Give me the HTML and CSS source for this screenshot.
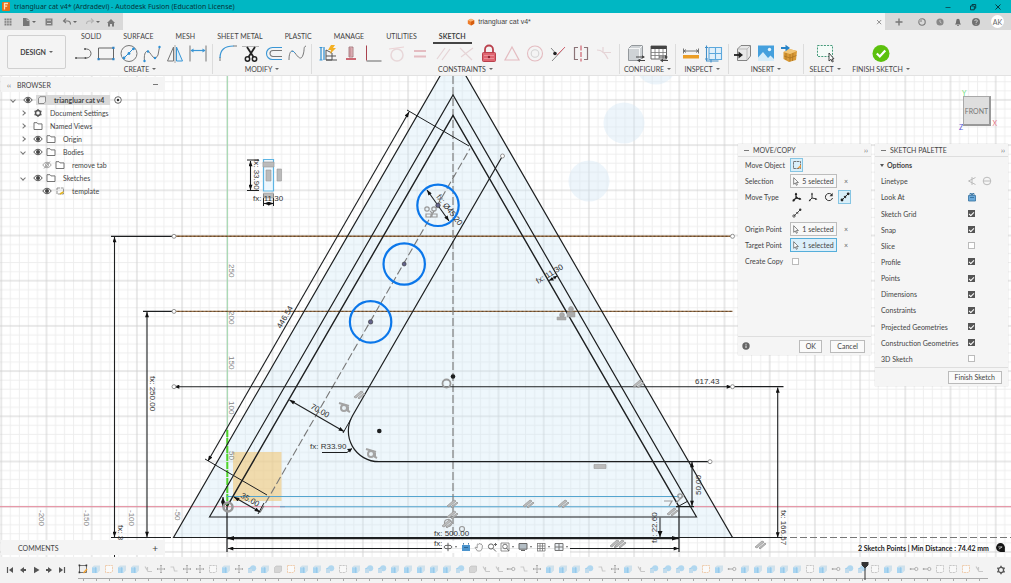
FILE: index.html
```html
<!DOCTYPE html>
<html lang="en">
<head>
<meta charset="utf-8">
<title>triangluar cat v4* (Ardradevi) - Autodesk Fusion (Education License)</title>
<link rel="stylesheet" href="styles.css">
</head>
<body>
<svg class="defs" aria-hidden="true">
  <symbol id="eye" viewBox="0 0 10 8"><path d="M.7 4Q5-1.6 9.3 4 5 9.6.7 4z" fill="none" stroke="#555" stroke-width="1"/><circle cx="5" cy="4" r="2" fill="#444"/></symbol>
  <symbol id="eyeoff" viewBox="0 0 10 8"><path d="M.7 4Q5-1.6 9.3 4 5 9.6.7 4zM2 7.5 8 .5" fill="none" stroke="#999" stroke-width=".9"/><circle cx="5" cy="4" r="1.6" fill="none" stroke="#999" stroke-width=".8"/></symbol>
  <symbol id="folder" viewBox="0 0 10 8"><path d="M1 7.5V.7h3l1 1.2h4v5.6z" fill="#fff" stroke="#666" stroke-width=".9"/></symbol>
  <symbol id="cursor" viewBox="0 0 6 9"><path d="M.7.7v6.6l1.6-1.4 1.1 2.4 1-.5-1-2.3h2z" fill="#fff" stroke="#555" stroke-width=".7"/></symbol>
  <symbol id="t-S" viewBox="0 0 10 10"><path d="M1.5 1.5h7v7h-7z" fill="#eee" stroke="#555" stroke-width=".8"/><path d="M.6.6h1.6v1.6H.6zM7.6.6h1.6v1.6H7.6zM.6 7.6h1.6v1.6H.6z" fill="#333"/><path d="m5.5 9 3.5-4" stroke="#f2a12d" stroke-width="1.4"/></symbol>
  <symbol id="t-E" viewBox="0 0 10 10"><path d="M1 3.2h5.5V9H1z" fill="#a9d5f1"/><path d="m1 3.2 2-1.8h6L6.5 3.2zM6.5 3.2 9 1.4v5.2L6.5 9z" fill="#d0e1eb"/><path d="M4.5 3.2V9" stroke="#90c4e5" stroke-width=".7"/></symbol>
  <symbol id="t-C" viewBox="0 0 10 10"><path d="M1 4.6 5 2.5v4.800L1.500 9z" fill="#a2ceeb"/><circle cx="6.200" cy="4.300" r="3" fill="#b1d7ef"/><path d="M1 5h4v4H1z" fill="#c2dced"/></symbol>
  <symbol id="t-K" viewBox="0 0 10 10"><path d="M1.5 1.5h7v6l-1.500 1h-5.500z" fill="#fafafa" stroke="#edc4a0" stroke-width=".8" stroke-dasharray="2.200 .6"/></symbol>
  <symbol id="t-g" viewBox="0 0 10 10"><path d="M1.5 1.5h7v6l-1.500 1h-5.500z" fill="#f8f8f8" stroke="#bbb" stroke-width=".8" stroke-dasharray="2.200 .8"/></symbol>
  <symbol id="t-M" viewBox="0 0 10 10"><path d="M5 1v8M1 5h8M4 2l1-1 1 1M4 8l1 1 1-1M2 4 1 5l1 1M8 4l1 1-1 1" fill="none" stroke="#aaa" stroke-width=".9"/></symbol>
  <symbol id="t-G" viewBox="0 0 10 10"><path d="M1.500 3.500 3 2h5.500v5L7 8.500H1.500z" fill="#d5d5d5" stroke="#bcbcbc" stroke-width=".6"/></symbol>
  <symbol id="t-L" viewBox="0 0 10 10"><path d="M2 2.500 5 7.500H9M4.500 3v3" fill="none" stroke="#c8c8c8" stroke-width="1.200"/></symbol>
  <symbol id="t-N" viewBox="0 0 10 10"><path d="M1.500 3h3l1 4h3" fill="none" stroke="#ccc" stroke-width="1.200"/></symbol>
  <symbol id="t-D" viewBox="0 0 10 10"><path d="M1 5h5" stroke="#aaa"/><circle cx="7.300" cy="5" r="1.600" fill="none" stroke="#aaa" stroke-width=".9"/><circle cx="1.600" cy="5" r=".9" fill="#aaa"/></symbol>
</svg>

<header class="titlebar">
  <svg class="titlebar__logo" viewBox="0 0 8 9"><rect width="8" height="9" rx="1" fill="#e8701a"/><path d="M2.500 7.500v-6h3.500M2.500 4.200h2.700" fill="none" stroke="#ffe0bc" stroke-width="1.300"/></svg>
  <span class="titlebar__text">triangluar cat v4* (Ardradevi) - Autodesk Fusion (Education License)</span>
  <div class="titlebar__win">
    <button aria-label="Minimize"><svg viewBox="0 0 8 8"><path d="M1.500 4.500h5" stroke="#075962"/></svg></button>
    <button aria-label="Restore"><svg viewBox="0 0 8 8"><path d="M1.500 3h3.800v3.800H1.500zM3 3V1.500h3.700v3.700H5.300" fill="none" stroke="#053e46"/></svg></button>
    <button aria-label="Close"><svg viewBox="0 0 8 8"><path d="m1.500 1.500 5 5m0-5-5 5" stroke="#053e46"/></svg></button>
  </div>
</header>

<div class="docbar">
  <div class="docbar__quick">
    <button aria-label="Data panel"><svg viewBox="0 0 10 10"><path d="M1.500 1.500h7v7h-7z" fill="#808080"/><path d="M1 3.700h8M1 6.200h8M3.700 1v8M6.200 1v8" stroke="#d9d9d9" stroke-width=".7"/></svg></button>
    <button aria-label="File"><svg viewBox="0 0 10 10"><path d="M2 1h4l2.500 2.500V9H2z" fill="#777"/><path d="M6 1v2.500h2.500" stroke="#ddd" fill="none" stroke-width=".6"/></svg><i class="caret"></i></button>
    <button aria-label="Save"><svg viewBox="0 0 10 10"><path d="M1.500 1.500h7v7h-7z" fill="#808080"/><path d="M3 3.200h4M3 6.500h4" stroke="#ddd" stroke-width=".9"/></svg></button>
    <button aria-label="Undo"><svg viewBox="0 0 10 10"><path d="M4 1.500 1.500 4 4 6M2 4h3.500Q8.500 4 8.500 7.500" fill="none" stroke="#777" stroke-width="1.100"/></svg><i class="caret"></i></button>
    <button aria-label="Redo"><svg viewBox="0 0 10 10"><path d="M6 1.500 8.500 4 6 6M8 4H4.500Q1.500 4 1.500 7" fill="none" stroke="#b5b5b5" stroke-width="1.100"/></svg><i class="caret"></i></button>
    <button aria-label="Home"><svg viewBox="0 0 10 10"><path d="M1 6 5 2l4 4H8v3.500H6V7H4v2.500H2V6z" fill="#777"/></svg></button>
  </div>
  <div class="docbar__tab">
    <svg class="docbar__cube" viewBox="0 0 10 10"><path d="m5 .8 4 2v4.500l-4 2-4-2V2.800z" fill="#ee7b28"/><path d="m5 .8 4 2-4 1.900-4-1.900z" fill="#f9b477"/><path d="m5 4.700 4-1.900v4.500l-4 2z" fill="#d65e10"/></svg>
    <span>triangluar cat v4*</span>
  </div>
  <button class="docbar__close" aria-label="Close document"><svg viewBox="0 0 8 8"><path d="m2 2 4.200 4.200M6.200 2 2 6.200" stroke="#777" stroke-width=".8"/></svg></button>
  <div class="docbar__right">
    <button aria-label="New tab"><svg viewBox="0 0 10 10"><path d="M5 1.500v7M1.500 5h7" stroke="#777" stroke-width="1.400"/></svg></button>
    <button aria-label="Extensions"><svg viewBox="0 0 10 10"><circle cx="5" cy="5" r="3.200" fill="none" stroke="#777" stroke-width="1.100"/><path d="M5 5V1.500A3.500 3.500 0 0 0 1.500 5z" fill="#aaa"/></svg></button>
    <button aria-label="Job status"><svg viewBox="0 0 10 10"><circle cx="5" cy="5" r="3.600" fill="#888"/><path d="M5 3v2l1.500 1" fill="none" stroke="#ddd" stroke-width=".7"/></svg></button>
    <button aria-label="Notifications"><svg viewBox="0 0 10 10"><path d="M2 7.500Q3.200 6 3.200 4a1.800 2.300 0 0 1 3.600 0Q6.800 6 8 7.500zM4 8.200h2v.9H4z" fill="#6e6e6e"/></svg></button>
    <button aria-label="Help"><svg viewBox="0 0 10 10"><circle cx="5" cy="5" r="4" fill="#707070"/><path d="M3.700 4a1.300 1.200 0 1 1 1.800 1.100Q5 5.300 5 6M5 6.800v.9" fill="none" stroke="#ddd" stroke-width=".9"/></svg></button>
    <button class="avatar">AK</button>
  </div>
</div>

<div class="ribbon">
  <button class="ribbon__workspace">DESIGN<i class="caret"></i></button>
  <div class="ribbon__body">
    <nav class="tabs">
      <button>SOLID</button><button>SURFACE</button><button>MESH</button><button>SHEET METAL</button><button>PLASTIC</button><button>MANAGE</button><button>UTILITIES</button><button class="tabs__on">SKETCH</button>
    </nav>
    <div class="groups">
      <section class="group group--create">
        <div class="group__tools">
          <button aria-label="Line"><svg viewBox="0 0 20 20"><path d="M3 14h10.500a4.500 4.500 0 0 0 0-9H12" fill="none" stroke="#666"/><circle cx="3" cy="14" r="1" fill="#555"/><circle cx="12.500" cy="14" r="1" fill="#555"/><circle cx="12" cy="5" r="1" fill="#555"/></svg></button>
          <button aria-label="Rectangle"><svg viewBox="0 0 20 20"><path d="M2.500 4h15v11h-15z" fill="none" stroke="#666"/><path d="M16.300 2.800h2.200V5h-2.200zM1.500 14h2.200v2.200H1.500zM16.300 14h2.200v2.200h-2.200z" fill="#2f82c4"/></svg></button>
          <button aria-label="Circle"><svg viewBox="0 0 20 20"><circle cx="10" cy="9.500" r="8" fill="none" stroke="#777"/><path d="m5 14 9.500-9.500" stroke="#2d8fd5"/><g fill="#2d8fd5"><circle cx="5" cy="14" r="1.400"/><circle cx="10" cy="9.500" r="1.400"/><circle cx="14.500" cy="4.800" r="1.400"/></g></svg></button>
          <button aria-label="Spline"><svg viewBox="0 0 20 20"><path d="M2.500 17C1.500 8 5 5 8 9s5 8 8 2l1.500-8" fill="none" stroke="#777"/><g fill="#2d8fd5"><circle cx="2.500" cy="17" r="1.200"/><circle cx="6" cy="7.500" r="1.200"/><circle cx="13" cy="14" r="1.200"/><circle cx="17.500" cy="3" r="1.200"/></g></svg></button>
          <button aria-label="Mirror"><svg viewBox="0 0 20 20"><path d="M8.500 3 2.500 17h6z" fill="none" stroke="#777"/><path d="M11.500 3v14h6z" fill="#dceefa" stroke="#3a96d5"/><path d="M10 1v18" stroke="#888" stroke-width=".7"/></svg></button>
          <button aria-label="Dimension"><svg viewBox="0 0 20 20"><path d="M2 1.500v16M18 1.500v16" stroke="#777"/><path d="M3 6.500h14" stroke="#3a96d5" stroke-width="1.200"/><path d="m2.500 6.500 3-2v4zM17.500 6.500l-3-2v4z" fill="#3a96d5"/></svg></button>
        </div>
        <button class="group__label">CREATE<i class="caret"></i></button>
      </section>
      <section class="group group--modify">
        <div class="group__tools">
          <button aria-label="Fillet"><svg viewBox="0 0 20 20"><path d="M2 17v-4M15 2h4" stroke="#777"/><path d="M2 14Q2 2 15.500 2" fill="none" stroke="#3a96d5" stroke-width="1.200"/></svg></button>
          <button aria-label="Trim"><svg viewBox="0 0 20 20"><path d="M1 2.500h17" stroke="#999" stroke-width=".7"/><path d="m6 3 6.500 10M14 3 7.500 13" stroke="#222" stroke-width="1.800"/><circle cx="6.500" cy="15" r="2.200" fill="none" stroke="#222" stroke-width="1.500"/><circle cx="13.500" cy="15" r="2.200" fill="none" stroke="#222" stroke-width="1.500"/></svg></button>
          <button aria-label="Offset"><svg viewBox="0 0 20 20"><path d="M18 3.500H8.500a6 6 0 0 0 0 12H18" fill="none" stroke="#3a96d5" stroke-width="1.100"/><path d="M18 6.500H9a3 3 0 0 0 0 6h9" fill="none" stroke="#777" stroke-width="1.100"/></svg></button>
          <button aria-label="Break"><svg viewBox="0 0 20 20"><path d="M2 16C2 7 5 5 8 9s6 8 8 2 0-8 3-9" fill="none" stroke="#777"/><path d="M4.500 7.500Q6 6 8 9" fill="none" stroke="#3a96d5"/></svg></button>
        </div>
        <button class="group__label">MODIFY<i class="caret"></i></button>
      </section>
      <section class="group group--constraints">
        <div class="group__tools">
          <button aria-label="Auto constrain"><svg viewBox="0 0 20 20"><path d="M3 3v13M6 3v13" stroke="#3a96d5" stroke-width="1.300"/><path d="M1.500 3.500h3M1.500 16h3" stroke="#3a96d5"/><path d="M8 16V6l6 3v7zM8 16h11M8 12h10" fill="none" stroke="#555"/><path d="m13 1-3 5h3l-1 4 6-6h-3l2-3z" fill="#f4b023"/></svg></button>
          <button aria-label="Horizontal vertical"><svg viewBox="0 0 20 20"><path d="M8 3h4v10H8z" fill="#e7bfc4" stroke="#9a6a70" stroke-width=".8"/><path d="M8.500 5h2M8.500 7h2M8.500 9h2M8.500 11h2" stroke="#9a4f58" stroke-width=".7"/><path d="M5 14h10v2H5z" fill="#cc6873"/></svg></button>
          <button aria-label="Perpendicular"><svg viewBox="0 0 20 20"><path d="M2.500 1.500v15" stroke="#a9424e"/><path d="M2.500 17h15" stroke="#666"/></svg></button>
          <button class="dim" aria-label="Tangent"><svg viewBox="0 0 20 20"><circle cx="10" cy="11" r="6" fill="none" stroke="#c0737c" stroke-width="1.500"/><path d="m2 5 15-2" stroke="#d4606c"/></svg></button>
          <button class="dim2" aria-label="Equal"><svg viewBox="0 0 20 20"><path d="M4 7h12M4 12.500h12" stroke="#c85563" stroke-width="2.200"/></svg></button>
          <button class="dim" aria-label="Parallel"><svg viewBox="0 0 20 20"><path d="M4 15 12 4M9 16l8-11" stroke="#b56570" stroke-width="1.200"/></svg></button>
          <button class="dim" aria-label="Crossing"><svg viewBox="0 0 20 20"><path d="M4 4 16 16M17 4 5 13" stroke="#b56570" stroke-width="1.100"/></svg></button>
          <button aria-label="Fix"><svg viewBox="0 0 20 20"><path d="M6 9V5.500a4 4 0 0 1 8 0V9" fill="none" stroke="#ba414d" stroke-width="1.800"/><rect x="3.500" y="8.500" width="13" height="9" rx="1" fill="#df6570" stroke="#ba414d"/><path d="M5 11.500h10M5 14.500h10" stroke="#f0a3aa" stroke-width=".7"/><circle cx="10" cy="13" r="1.200" fill="#8d2733"/></svg></button>
          <button class="dim2" aria-label="Midpoint"><svg viewBox="0 0 20 20"><path d="m10 3 7 13H3z" fill="none" stroke="#c85563" stroke-width="1.200"/></svg></button>
          <button class="dim2" aria-label="Concentric"><svg viewBox="0 0 20 20"><circle cx="10" cy="9.500" r="7.500" fill="none" stroke="#c85563" stroke-width="1.100"/><circle cx="10" cy="9.500" r="3.800" fill="none" stroke="#999" stroke-width="1.100"/></svg></button>
          <button aria-label="Coincident"><svg viewBox="0 0 20 20"><path d="m3 4 4.500 5M4 17 17 3" stroke="#888"/><path d="m9 11 8-8" stroke="#d46874"/><circle cx="7" cy="9.500" r="1.800" fill="#222"/></svg></button>
          <button aria-label="Symmetry"><svg viewBox="0 0 20 20"><path d="M7 3.500H3.500v12H7M13 3.500h3.500v12H13" fill="none" stroke="#8b7377" stroke-width="1.200"/><path d="M10 1.500v16" stroke="#c64554" stroke-dasharray="5 1.500"/></svg></button>
          <button class="dim" aria-label="Curvature"><svg viewBox="0 0 20 20"><path d="M3 6q7 0 11 9M9 3v6M9 8.500h8" fill="none" stroke="#b56570" stroke-width="1.200"/></svg></button>
        </div>
        <button class="group__label">CONSTRAINTS<i class="caret"></i></button>
      </section>
      <section class="group group--configure">
        <div class="group__tools">
          <button aria-label="Configure"><svg viewBox="0 0 20 20"><path d="M2.500 4.500 5.500 1.500h11v12l-3 3h-11z" fill="#cfd3d6" stroke="#8a8f93" stroke-width=".9"/><path d="M2.500 4.500h11v12M13.500 4.500l3-3" fill="none" stroke="#fff" stroke-width=".8"/><path d="M10 13h8M12 16.500h7" stroke="#444" stroke-width="1.100"/><path d="m19 13-3-1.800v3.600zM11 16.500l3-1.800v3.600z" fill="#444"/></svg></button>
          <button aria-label="Configuration table"><svg viewBox="0 0 20 20"><path d="M2 2h15.500v13H2z" fill="#fff" stroke="#555" stroke-width=".9"/><path d="M2 2h15.500v3H2z" fill="#444"/><path d="M2 8.500h15.500M2 11.500h15.500M6 5v10M10 5v10M14 5v10" stroke="#777" stroke-width=".8"/><path d="M10 13h8M12 16.500h7" stroke="#444" stroke-width="1.100"/><path d="m19 13-3-1.800v3.600zM11 16.500l3-1.800v3.600z" fill="#444"/></svg></button>
        </div>
        <button class="group__label">CONFIGURE<i class="caret"></i></button>
      </section>
      <section class="group group--inspect">
        <div class="group__tools">
          <button aria-label="Measure"><svg viewBox="0 0 20 20"><path d="M3 7h14M2.500 4.500v5M17.500 4.500v5M5 5.500 3 7l2 1.500M15 5.500 17 7l-2 1.500" fill="none" stroke="#666" stroke-width=".9"/><path d="M2 11h16v3.500H2z" fill="#eb9d25"/></svg></button>
          <button aria-label="Section"><svg viewBox="0 0 20 20"><path d="M5 3.500h12.500v12H5zM5 9.500h12.500M11.500 3.500v12" fill="#e1f0fa" stroke="#5da8dc" stroke-width="1.100"/><path d="M2.500 1.500v15.500h12M1 3.500h3M1 15h3M7 15.500v3" fill="none" stroke="#428fc8" stroke-width="1.100"/></svg></button>
        </div>
        <button class="group__label">INSPECT<i class="caret"></i></button>
      </section>
      <section class="group group--insert">
        <div class="group__tools">
          <button aria-label="Insert derive"><svg viewBox="0 0 20 20"><path d="M4.500 5 8 1.500h9.500V12L14 16.500H4.500z" fill="#e8e8e8" stroke="#777" stroke-width=".9"/><path d="M4.500 5H14v11M14 5l3.500-3.500" fill="none" stroke="#aaa" stroke-width=".7"/><path d="M1 11h5" stroke="#222" stroke-width="1.800"/><path d="m10 11-4.500-3.500v7z" fill="#222"/></svg></button>
          <button aria-label="Insert image"><svg viewBox="0 0 20 20"><rect x="2" y="1.500" width="16" height="15.500" fill="#45a0dd"/><path d="m2 13.500 5-5.500 5 6 2.500-2.500 3.500 3.500v2H2z" fill="#d5ecf9"/><circle cx="13.500" cy="5.500" r="1.700" fill="#e8f5fc"/></svg></button>
          <button aria-label="Insert mesh"><svg viewBox="0 0 20 20"><path d="m4.500 8 6-3 7.500 2-1 9-7 2-5.500-3z" fill="#d99a37"/><path d="m4.500 8 6.500 2 7-3-7.500-2z" fill="#f2c77a"/><path d="M11 10v7.500M7 9v7M14 9l-.5 8M5 12l6 2 6.500-2.500" stroke="#9f6a1c" stroke-width=".6" fill="none"/><path d="M2 4h5" stroke="#2783c7" stroke-width="2"/><path d="M11 4 6.500.8v6.400z" fill="#2783c7"/></svg></button>
        </div>
        <button class="group__label">INSERT<i class="caret"></i></button>
      </section>
      <section class="group group--select">
        <div class="group__tools">
          <button aria-label="Select"><svg viewBox="0 0 20 20"><path d="M2.500 1.500h15v11h-15z" fill="#f5fbf8" stroke="#459a7a" stroke-width="1" stroke-dasharray="2 1.200"/><path d="M14 9v8l2-1.700 1.200 2.700 1.100-.5-1.200-2.600H19z" fill="#fff" stroke="#333" stroke-width=".9"/></svg></button>
        </div>
        <button class="group__label">SELECT<i class="caret"></i></button>
      </section>
      <section class="group group--finish">
        <div class="group__tools">
          <button aria-label="Finish sketch"><svg viewBox="0 0 20 20"><circle cx="10" cy="9.500" r="8.500" fill="#5cc10d"/><path d="m5.800 9.500 3 3 5.500-6" fill="none" stroke="#fff" stroke-width="2.200"/></svg></button>
        </div>
        <button class="group__label">FINISH SKETCH<i class="caret"></i></button>
      </section>
    </div>
  </div>
</div>

<main class="workspace">
  <svg class="drawing" viewBox="0 76 1011 481" preserveAspectRatio="xMinYMin slice">
    <defs>
      <pattern id="grid" x="227.300" y="506.700" width="45.200" height="45.200" patternUnits="userSpaceOnUse">
        <path d="M9.040 0v45.200M18.080 0v45.200M27.120 0v45.200M36.160 0v45.200M0 9.040h45.200M0 18.080h45.200M0 27.120h45.200M0 36.160h45.200" stroke="#ececec" stroke-width=".9"/>
        <path d="M0 0v45.200M45.200 0v45.200M0 0h45.200M0 45.200h45.200" stroke="#cfcfcf" stroke-width=".9"/>
      </pattern>
      <marker id="arr" viewBox="0 0 8 6" refX="8" refY="3" markerWidth="7" markerHeight="4" markerUnits="userSpaceOnUse" orient="auto-start-reverse"><path d="m0 0 8 3-8 3z" fill="#111"/></marker>
      <g id="par"><path d="M-5 2 2-4l2 1-7 6zM-1 3l6-5 1 1-6 5z" fill="#bdbdbd" stroke="#999" stroke-width=".8"/></g>
      <g id="tan" fill="none" stroke="#a3a3a3" stroke-width="2"><circle r="3"/><path d="M-5-5 5-2M4-1v4l2 1"/></g>
    </defs>
    <rect y="76" width="1011" height="481" fill="#fff"/>
    <rect y="76" width="1011" height="481" fill="url(#grid)"/>
    <path d="M173.500 537.500 453 53.500l279.500 484z" fill="#c9e5f6" fill-opacity=".32"/>
    <g fill="#d4e8f6" fill-opacity=".42"><circle cx="624" cy="123" r="20.500"/><circle cx="589" cy="181" r="20.500"/><circle cx="656" cy="64" r="20.500"/></g>
    <rect x="233" y="452" width="48.500" height="49" fill="#f2c878" fill-opacity=".6"/>
    <path d="M227.300 76v380" stroke="#9bd7a9"/>
    <path d="M227.300 430v77" stroke="#4fd62a" stroke-width="2" stroke-dasharray="7 1"/>
    <path d="M0 506.700h285M694 506.700h317" stroke="#e5879a"/>
    <path d="M227 496.500h452M280 506.700h399" stroke="#55a5cf" stroke-width="1.100"/>
    <path d="M173.500 236.300h559M173.500 311.400h559" stroke="#9a7046" stroke-width="1.400"/>
    <path d="M173.500 236.300h559M173.500 311.400h559" stroke="#4e3a26" stroke-width=".8" stroke-dasharray="2 2"/>
    <path d="M453 76v462M260 512.600l210-364" fill="none" stroke="#777" stroke-width="1.100" stroke-dasharray="8 3"/>
    <path d="M780 537.500h231" stroke="#777" stroke-dasharray="7 3"/>
    <g fill="none" stroke="#1d1f20" stroke-width="1.200">
      <path d="M173.500 537.500 453 53.500l279.500 484z"/>
      <path d="M209.500 517 453 95l243.500 422z"/>
      <path d="M227 506.700 453 115.500l226 391.200" stroke-width="1.400"/>
      <path d="M502.500 156 352.500 415.700A30.600 30.600 0 0 0 379 461.700H710"/>
      <path d="M732 537.500h50M111 537.500h60M111 236.300h62.500M143 311.400h30.500M732.500 386.700h51M227 507v45M679 507v45M676 506.700h18"/>
      <path d="M227 538.300h452" stroke-width="2"/>
      <path d="m407 110 62 36M205 459l62 36M343 433l8-14M258 514l6-11M247 160h12M247 190.500h12M263.500 194v12M273.500 194v12M679 506l9-5M227 506l-5-6" stroke-width="1"/>
    </g>
    <g fill="none" stroke="#1d1f20" stroke-width="1.100">
      <g marker-start="url(#arr)" marker-end="url(#arr)">
        <path d="M114.500 237v300"/><path d="M147 312v225"/><path d="M174 386.700h558"/><path d="M777.700 387.500v150"/><path d="M228 548.500h451"/>
        <path d="M409 112 208 461"/><path d="m289.500 400 54.500 31.500"/><path d="m234 497 26 15"/>
        <path d="M427 190l22 31"/><path d="M692 462v44"/><path d="M250.500 161v29"/><path d="M264 203.500h9.500"/>
        <path d="M223 497v10"/>
      </g>
    </g>
    <path d="M660 517.500v19.500M322 452.500h25l5-4M549 280.500l8-4.500" fill="none" stroke="#1d1f20"/>
    <path d="m657.500 531 2.500 6 2.500-6zM352 448.500l-5 .5 3 3.500zM549 280.500l5 0-2-3.500zM557 276l-4 .5 2 3zM227 538.300l7-2.300v4.600zM679 538.300l-7-2.300v4.600z" fill="#111"/>
    <path d="M114.500 552v5" stroke="#1d1f20"/>
    <g fill="none" stroke="#0b77ea" stroke-width="2.200"><circle cx="438" cy="205.300" r="20.700"/><circle cx="404.200" cy="264" r="20.700"/><circle cx="370.600" cy="321.900" r="20.700"/></g>
    <g fill="#65658c" stroke="#333" stroke-width=".6"><circle cx="438" cy="205.300" r="2.200"/><circle cx="404.200" cy="264" r="2"/><circle cx="370.600" cy="321.900" r="2.200"/></g>
    <circle cx="379.300" cy="431" r="2.300" fill="#1d1f20"/><circle cx="453" cy="376.500" r="2.300" fill="#1d1f20"/>
    <g fill="#fff" stroke="#888" stroke-width=".9"><circle cx="174" cy="236.300" r="2"/><circle cx="732.500" cy="236.300" r="2"/><circle cx="174" cy="311.400" r="2"/><circle cx="174" cy="386.700" r="2"/><circle cx="732.500" cy="386.700" r="2"/><circle cx="710" cy="461.700" r="2"/><circle cx="502.500" cy="156" r="2"/></g>
    <path d="M263.500 159.500h10v31.500h-10z" fill="#edf7fd" stroke="#5db5e4" stroke-width="1.200"/>
    <g fill="#bbb" stroke="#999" stroke-width=".6"><path d="M263 162h11v5h-11zM266 170h5v11h-5zM277 169h4.500v12H277zM594 464.500h12v4h-12z"/><path d="M263.500 193h10v5h-10z"/></g>
    <g fill="none" stroke="#999" stroke-width="1.200"><circle cx="427" cy="209" r="2.200"/><circle cx="434" cy="209" r="2.200"/><path d="M426 214h5v3h-5zM432 214h5v3h-5zM430 211l3 3"/><circle cx="228" cy="507" r="4.500" stroke-width="2.500"/><circle cx="680" cy="496" r="2.200"/><path d="M664 501h8l-3 5M676 503l8-8"/><circle cx="446.500" cy="383.500" r="4" stroke-width="1.800"/><circle cx="448" cy="523" r="3.500"/><circle cx="462" cy="529" r="2.500"/></g>
    <use href="#tan" x="344" y="408"/><use href="#tan" x="371" y="454"/>
    <use href="#par" x="452" y="504"/><use href="#par" x="452" y="515"/><use href="#par" x="528" y="504"/><use href="#par" x="563" y="504"/><use href="#par" x="672" y="512"/><use href="#par" x="638" y="384"/><use href="#par" x="359" y="395"/><use href="#par" x="615" y="544"/><use href="#par" x="620" y="544"/><use href="#par" x="760" y="545"/><use href="#par" x="447" y="524"/>
    <g fill="#aaa" stroke="#999" stroke-width=".5"><circle cx="562" cy="315" r="2.500"/><circle cx="571" cy="309" r="2.500"/><path d="M557 317h9v3h-9zM567 312h8v5h-8z"/></g>
    <g class="ruler">
      <text transform="translate(229 264)rotate(90)">250</text><text transform="translate(229 311)rotate(90)">200</text><text transform="translate(229 356)rotate(90)">150</text><text transform="translate(229 401)rotate(90)">100</text><text transform="translate(229 451)rotate(90)">50</text>
      <text transform="translate(39 510)rotate(90)">-200</text><text transform="translate(84 510)rotate(90)">-150</text><text transform="translate(129 510)rotate(90)">-100</text><text transform="translate(175 509)rotate(90)">-50</text>
    </g>
    <g class="dims">
      <text x="695" y="383.500">617.43</text><text x="434" y="535.500">fx: 500.00</text><text x="434" y="546">fx:</text><text x="310" y="448.500">fx: R33.90</text><text x="253" y="200.500">fx: 11.30</text>
      <text transform="translate(254 159)rotate(90)">fx: 33.90</text>
      <text transform="translate(150 376)rotate(90)">fx: 250.00</text><text transform="translate(781 510)rotate(90)">fx: 166.57</text><text transform="translate(118 525)rotate(90)">fx: 3</text>
      <text transform="translate(701 495)rotate(-90)">50.00</text><text transform="translate(657 543)rotate(-90)">fx: 22.60</text>
      <text transform="translate(281 329)rotate(-60)">446.54</text><text transform="translate(310 408)rotate(30)">70.00</text><text transform="translate(240 497)rotate(30)">35.00</text>
      <text transform="translate(538 284)rotate(-31)">fx: 11.30</text><text transform="translate(436 197)rotate(52)">fx: Ø45.20</text>
    </g>
  </svg>

  <aside class="browser">
    <header class="browser__head"><span class="chev">‹‹</span><h2>BROWSER</h2><button class="minus" aria-label="Collapse browser"></button></header>
    <ul class="tree">
      <li class="tree__l0"><i class="arrow arrow--down"></i><svg class="ic"><use href="#eye"/></svg><span class="tree__root"><svg class="ic" viewBox="0 0 10 8"><path d="M1.500 2.500 3 .7h5.500v5L7 7.500H1.500z" fill="#eee" stroke="#777" stroke-width=".8"/></svg><b>triangluar cat v4</b></span><svg class="ic" viewBox="0 0 8 8"><circle cx="4" cy="4" r="3.300" fill="#fff" stroke="#444" stroke-width=".8"/><circle cx="4" cy="4" r="1.300" fill="#333"/></svg></li>
      <li class="tree__l1"><i class="arrow"></i><svg class="ic" viewBox="0 0 10 8"><circle cx="5" cy="4" r="2.500" fill="none" stroke="#555" stroke-width="1.500"/><path d="M5 0v1.500M5 6.500V8M1.500 2l1.300.8M7.200 5.200 8.500 6M1.500 6l1.300-.8M7.200 2.800 8.500 2" stroke="#555" stroke-width="1.200"/></svg><span>Document Settings</span></li>
      <li class="tree__l1"><i class="arrow"></i><svg class="ic"><use href="#folder"/></svg><span>Named Views</span></li>
      <li class="tree__l1"><i class="arrow"></i><svg class="ic"><use href="#eye"/></svg><svg class="ic"><use href="#folder"/></svg><span>Origin</span></li>
      <li class="tree__l1"><i class="arrow arrow--down"></i><svg class="ic"><use href="#eye"/></svg><svg class="ic"><use href="#folder"/></svg><span>Bodies</span></li>
      <li class="tree__l2"><svg class="ic"><use href="#eyeoff"/></svg><svg class="ic"><use href="#folder"/></svg><span>remove tab</span></li>
      <li class="tree__l1"><i class="arrow arrow--down"></i><svg class="ic"><use href="#eye"/></svg><svg class="ic"><use href="#folder"/></svg><span>Sketches</span></li>
      <li class="tree__l2"><svg class="ic"><use href="#eye"/></svg><svg class="ic" viewBox="0 0 10 8"><path d="M2 1h6.500v6H2z" fill="none" stroke="#777" stroke-width=".8" stroke-dasharray="3 .8"/><path d="m5 7 3.500-2" stroke="#e2b31e" stroke-width="1.500"/></svg><span>template</span></li>
    </ul>
  </aside>

  <div class="cube">
    <span class="cube__y">Y</span><span class="cube__z">Z</span><span class="cube__x">X</span>
    <button class="cube__face">FRONT</button>
  </div>

  <div class="dialogs">
    <section class="panel">
      <header class="panel__head"><button class="minus" aria-label="Collapse dialog"></button><h2>MOVE/COPY</h2><span class="chev">››</span></header>
      <div class="move">
        <span>Move Object</span><div><button class="tile tile--on" aria-label="Sketch objects"><svg viewBox="0 0 10 10"><path d="M1.500 1.500h7v7h-7z" fill="none" stroke="#666" stroke-width=".9" stroke-dasharray="2.500 .6"/><path d="m5 8.500 4-4v3z" fill="#f09e3f"/></svg></button></div>
        <span>Selection</span><div><button class="pick"><svg><use href="#cursor"/></svg>5 selected</button><button class="clear" aria-label="Clear selection">×</button></div>
        <span>Move Type</span><div class="types">
          <button class="tile" aria-label="Free move"><svg viewBox="0 0 10 10"><path d="M4 1v5l-3 3M4 6l5 1" fill="none" stroke="#222" stroke-width="1.200"/><path d="M2.700 3 4 .5 5.300 3zM.5 9.500l.5-2.700L3.200 9zM9.500 7.200 7 5.500 6.700 8zM4 4l3 2.500H4z" fill="#222"/></svg></button>
          <button class="tile" aria-label="Translate"><svg viewBox="0 0 10 10"><path d="M4 1.500V6L1.500 8.500M4 6l4.500 1" fill="none" stroke="#333"/><path d="M3 2.500 4 .5l1 2zM.8 9.300l.4-2L3 9zM9.500 7.200 7.300 6 7 8z" fill="#333"/></svg></button>
          <button class="tile" aria-label="Rotate"><svg viewBox="0 0 10 10"><path d="M8 3A3.600 3.600 0 1 0 8.500 6" fill="none" stroke="#333"/><path d="M8.700.8v3.400H5.500z" fill="#333"/></svg></button>
          <button class="tile tile--on" aria-label="Point to point"><svg viewBox="0 0 10 10"><path d="m2 8 6-6" stroke="#333"/><circle cx="2" cy="8" r="1.400" fill="#222"/><circle cx="8.200" cy="1.800" r="1.400" fill="#222"/><path d="M3.500 4 6 6.500 6.200 3.800z" fill="#222"/></svg></button>
          <button class="tile" aria-label="Point to position"><svg viewBox="0 0 10 10"><path d="m2 8 6-6" stroke="#555"/><circle cx="2" cy="8" r="1.200" fill="none" stroke="#333" stroke-width=".8"/><circle cx="8.200" cy="1.800" r="1.200" fill="#333"/><path d="m3.800 4 2.400 2.200V4z" fill="#444"/></svg></button>
        </div>
        <span>Origin Point</span><div><button class="pick"><svg><use href="#cursor"/></svg>1 selected</button><button class="clear" aria-label="Clear origin point">×</button></div>
        <span>Target Point</span><div><button class="pick pick--on"><svg><use href="#cursor"/></svg>1 selected</button><button class="clear" aria-label="Clear target point">×</button></div>
        <label for="copy">Create Copy</label><div><input id="copy" type="checkbox"></div>
      </div>
      <footer class="panel__foot"><svg class="info" viewBox="0 0 8 8"><circle cx="4" cy="4" r="3.700" fill="#666"/><path d="M4 3.500V6M4 1.800v1" stroke="#fff" stroke-width=".9"/></svg><button class="btn btn--ok">OK</button><button class="btn">Cancel</button></footer>
    </section>

    <section class="panel">
      <header class="panel__head"><button class="minus" aria-label="Collapse palette"></button><h2>SKETCH PALETTE</h2><span class="chev">››</span></header>
      <div class="options">
        <h3>Options</h3>
        <div><span>Linetype</span><span class="line"><svg viewBox="0 0 10 10"><path d="M8.500 1.500 1.500 5l7 3.500M5 1v8" fill="none" stroke="#bbb"/></svg><svg viewBox="0 0 10 10"><circle cx="5" cy="5" r="3.800" fill="none" stroke="#bbb"/><path d="M1 5h8" stroke="#bbb"/></svg></span></div>
        <div><span>Look At</span><svg viewBox="0 0 10 10"><path d="M1.500 3.500h7v5.500h-7z" fill="#6ba9da" stroke="#34719f" stroke-width=".8"/><path d="M3 3V1.500h1.500V3M5.500 3V1.500H7V3M3 5.500h4" fill="none" stroke="#34719f" stroke-width=".9"/></svg></div>
        <label>Sketch Grid<input type="checkbox" checked></label>
        <label>Snap<input type="checkbox" checked></label>
        <label>Slice<input type="checkbox"></label>
        <label>Profile<input type="checkbox" checked></label>
        <label>Points<input type="checkbox" checked></label>
        <label>Dimensions<input type="checkbox" checked></label>
        <label>Constraints<input type="checkbox" checked></label>
        <label>Projected Geometries<input type="checkbox" checked></label>
        <label>Construction Geometries<input type="checkbox" checked></label>
        <label>3D Sketch<input type="checkbox"></label>
      </div>
      <footer class="panel__foot"><button class="btn">Finish Sketch</button></footer>
    </section>
  </div>

  <section class="comments"><h2>COMMENTS</h2><button aria-label="Add comment">+</button></section>

  <nav class="navbar">
    <button aria-label="Orbit"><svg viewBox="0 0 10 10"><ellipse cx="5" cy="5" rx="4" ry="1.800" fill="none" stroke="#555" stroke-width=".9"/><path d="M5 .8v8.400" stroke="#555" stroke-width=".9"/></svg><i class="caret"></i></button>
    <button aria-label="Look at"><svg viewBox="0 0 10 10"><path d="M1 3h8v6H1z" fill="#4c94cd"/><path d="M2.500 2.500V1.200M7.500 2.500V1.200M3 5.500h4" stroke="#2c6797"/></svg></button>
    <button aria-label="Pan"><svg viewBox="0 0 10 10"><path d="M3.500 9 1 5.500l1-.5 1.200 1V2.500L4 1.800l.7.700 .8-1.300.8 1 .9-.4.500 1.200.8.500L8 7 6.500 9z" fill="#fafafa" stroke="#888" stroke-width=".8"/></svg></button>
    <button aria-label="Zoom"><svg viewBox="0 0 10 10"><circle cx="4" cy="4.500" r="2.600" fill="none" stroke="#666"/><path d="m6 6.500 3 3M7 2.500h3M8.500 1v3" stroke="#666"/></svg></button>
    <button aria-label="Fit"><svg viewBox="0 0 10 10"><path d="M1 1h8v8H1z" fill="none" stroke="#777" stroke-width=".8"/><circle cx="5" cy="4.500" r="2.300" fill="none" stroke="#666" stroke-width=".9"/><path d="m6.500 6 2.500 3" stroke="#666"/></svg><i class="caret"></i></button>
    <button aria-label="Display settings"><svg viewBox="0 0 10 10"><path d="M1 1.500h8v5.700H1zM3 8.500h4" fill="#b3bdc4" stroke="#666"/></svg><i class="caret"></i></button>
    <button aria-label="Grid settings"><svg viewBox="0 0 10 10"><path d="M1.500 1v8M4 1v8M6.500 1v8M9 1v8M1 1.500h8M1 4h8M1 6.500h8M1 9h8" stroke="#777" stroke-width=".8"/></svg><i class="caret"></i></button>
    <button aria-label="Viewports"><svg viewBox="0 0 10 10"><path d="M1 1.500h8v7H1zM5 1.500v7M1 5h8" fill="#e9eef2" stroke="#777"/></svg><i class="caret"></i></button>
  </nav>

  <p class="status"><b>2 Sketch Points | Min Distance : 74.42 mm</b><svg viewBox="0 0 10 10"><path d="M5 1a4 4 0 1 0 0 8h4V5a4 4 0 0 0-4-4z" fill="#161616"/><path d="M3 4.500h3.500M3.500 6.500l3-2" stroke="#ccc" stroke-width=".8"/></svg></p>
</main>

<footer class="timeline">
  <div class="player">
    <button aria-label="Start"><svg viewBox="0 0 8 8"><path d="M7 1v6L3 4z" fill="#555"/><path d="M1.500 1v6" stroke="#555" stroke-width="1.200"/></svg></button>
    <button aria-label="Step back"><svg viewBox="0 0 8 8"><path d="M5 1v6L1 4zM5 3h2v2H5z" fill="#555"/></svg></button>
    <button aria-label="Play"><svg viewBox="0 0 8 8"><path d="M2 .8v6.400L7.500 4z" fill="#555"/></svg></button>
    <button aria-label="Step forward"><svg viewBox="0 0 8 8"><path d="M3 1v6l4-3zM1 3h2v2H1z" fill="#555"/></svg></button>
    <button aria-label="End"><svg viewBox="0 0 8 8"><path d="M1 1v6l4-3z" fill="#555"/><path d="M6.500 1v6" stroke="#555" stroke-width="1.200"/></svg></button>
  </div>
  <div class="track">
    <ol id="features" class="track__items"></ol>
    <svg class="track__marker" viewBox="0 0 8 18"><path d="M1 0h6v3L4 6 1 3zM4 5v13" fill="#333" stroke="#333"/></svg>
  </div>
  <button class="gear" aria-label="Timeline settings"><svg viewBox="0 0 10 10"><circle cx="5" cy="5" r="2.600" fill="none" stroke="#555" stroke-width="1.300"/><path d="M5 .7v1.700M5 7.600v1.700M1.300 2.900l1.400.8M7.300 6.300l1.400.8M1.300 7.100l1.400-.8M7.300 3.700l1.400-.8" stroke="#555" stroke-width="1.500"/></svg></button>
</footer>
<script src="timeline.js"></script>
</body>
</html>
```
FILE: styles.css
```css
* { box-sizing: border-box; }
html, body { height: 100%; }
body {
  margin: 0;
  display: flex;
  flex-direction: column;
  overflow: hidden;
  background: #f4f4f4;
  color: #444;
  font: 7px/10px Lato, "Noto Sans", sans-serif;
}
button {
  display: inline-flex;
  align-items: center;
  justify-content: center;
  margin: 0;
  padding: 0;
  border: 0;
  background: none;
  color: inherit;
  font: inherit;
  white-space: nowrap;
}
h2, h3, ul, ol, p { margin: 0; padding: 0; font: inherit; list-style: none; }
svg { display: block; flex: none; }
.defs { position: absolute; width: 0; height: 0; }
.caret {
  border: 2px solid transparent;
  border-top-color: #666;
  border-bottom: 0;
  margin-left: 3px;
}

.titlebar { flex: none; display: flex; align-items: center; height: 13px; padding-left: 2px; background: #00b7c3; color: #06343a; }
.titlebar__logo { width: 8px; height: 9px; margin-right: 4px; }
.titlebar__text { flex: 1; font-family: "Noto Sans", sans-serif; }
.titlebar__win { display: flex; gap: 17px; padding-right: 9px; }
.titlebar__win svg { width: 8px; height: 8px; }

.docbar { flex: none; display: flex; align-items: stretch; height: 17px; }
.docbar__quick { display: flex; align-items: center; gap: 8px; width: 123px; padding-left: 3px; background: #d9d9d9; }
.docbar__quick svg, .docbar__right svg { width: 10px; height: 10px; }
.docbar__quick .caret { margin-left: 1px; }
.docbar__quick button:last-child { margin-left: -2px; }
.docbar__tab { flex: 1; display: flex; align-items: center; justify-content: center; gap: 3px; font-family: "Liberation Sans", sans-serif; }
.docbar__cube { width: 8px; height: 8px; }
.docbar__close svg { width: 8px; height: 8px; }
.docbar__close { padding-right: 2px; }
.docbar__right { display: flex; align-items: center; gap: 8px; width: 126px; padding-left: 9px; background: #d9d9d9; }
.docbar__right button:first-child { margin-right: 5px; }
.docbar__right .avatar { width: 13px; height: 13px; margin-left: 2px; border-radius: 50%; background: #fff; color: #666; }

.ribbon { flex: none; display: flex; height: 46px; padding-left: 7px; border-bottom: 1px solid #e2e2e2; }
.ribbon__workspace { width: 59px; height: 34px; margin-top: 5px; border: 1px solid #d0d0d0; border-radius: 2px; font-weight: bold; }
.ribbon__body { padding-left: 2px; }
.tabs { display: flex; gap: 10px; height: 14px; padding-left: 7px; }
.tabs button { padding: 0 6px; border-bottom: 2px solid transparent; }
.tabs .tabs__on { font-weight: bold; border-color: #444; }
.groups { display: flex; }
.group { flex: none; display: flex; flex-direction: column; align-items: center; height: 30px; border-right: 1px solid #dcdcdc; }
.group--create { width: 145px; }
.group--modify { width: 99px; }
.group--constraints { width: 308px; }
.group--configure { width: 56px; }
.group--inspect { width: 53px; }
.group--insert { width: 75px; }
.group--select { width: 42px; border: 0; }
.group--finish { width: 70px; border: 0; }
.group__tools { display: flex; gap: 3px; }
.group__tools svg { width: 20px; height: 20px; }
.group__label { height: 10px; }
.dim { opacity: .22; }
.dim2 { opacity: .35; }

.workspace { position: relative; flex: 1; min-height: 0; overflow: hidden; background: #fff; }
.drawing { width: 100%; height: 100%; }
.drawing text { font-family: "Liberation Sans", Arial, sans-serif; font-size: 8px; }
.dims { fill: #333; }
.ruler { fill: #858585; }

.browser { position: absolute; top: 1px; left: 1px; width: 164px; }
.browser__head { display: flex; align-items: center; height: 15px; padding: 0 7px 0 6px; background: #f4f4f4; }
.browser__head h2 { flex: 1; padding-left: 6px; }
.chev { color: #555; }
.minus { width: 5px; height: 1px; background: #777; }
.tree { padding-top: 1px; }
.tree li { display: flex; align-items: center; height: 13px; }
.tree .tree__l0 { padding-left: 10px; }
.tree .tree__l1 { padding-left: 20px; }
.tree .tree__l2 { padding-left: 41px; }
.ic { width: 10px; height: 8px; margin-right: 3px; }
.tree li > span { padding-left: 4px; }
.tree .tree__root { display: flex; align-items: center; height: 10px; margin-right: 3px; padding: 0 6px 0 1px; background: #d9d9d9; }
.tree__root .ic { margin-right: 7px; }
.arrow { width: 4px; height: 4px; margin: 0 8px 0 0; border: solid #777; border-width: 1px 1px 0 0; transform: rotate(45deg); }
.arrow--down { transform: rotate(135deg); }

.cube { position: absolute; top: 12px; right: 12px; width: 40px; height: 44px; color: #777; }
.cube__face { position: absolute; left: 4px; top: 8px; width: 28px; height: 30px; border: 1px solid #a9a9a9; border-right: 2px solid #999; border-bottom: 2px solid #999; background: #dedede; }
.cube__y { position: absolute; left: 3px; top: 0; color: #6fe07e; }
.cube__z { position: absolute; left: 0; bottom: 0; color: #5555d5; }
.cube__x { position: absolute; right: 2px; bottom: 4px; color: #e77b87; }

.dialogs { position: absolute; top: 68px; right: 3px; display: flex; align-items: flex-start; gap: 4px; }
.panel { display: flex; flex-direction: column; width: 133px; background: #f5f5f5; box-shadow: 0 0 1px #bbb; }
.panel__head { display: flex; align-items: center; height: 13px; padding: 0 3px 0 6px; border-bottom: 1px solid #dedede; }
.panel__head h2 { flex: 1; padding-left: 4px; }
.panel__foot { display: flex; align-items: center; justify-content: flex-end; gap: 8px; height: 19px; padding: 0 6px; border-top: 1px solid #dedede; }
.info { width: 8px; height: 8px; margin-right: auto; margin-left: -2px; }
.btn { height: 13px; padding: 0 6px; border: 1px solid #bbb; background: #fafafa; }
.btn--ok { width: 23px; }
.move { display: grid; grid-template-columns: 45px 1fr; grid-auto-rows: minmax(16px, auto); align-items: center; align-content: start; height: 179px; padding-left: 7px; }
.move > div { display: flex; align-items: center; }
.move > span { align-self: start; line-height: 16px; }
.move .types { flex-wrap: wrap; column-gap: 3px; max-width: 66px; }
.tile { width: 13px; height: 16px; border: 1px solid transparent; }
.tile svg { width: 10px; height: 10px; }
.tile--on { height: 14px; border-color: #86c5e3; background: #d9eff9; }
.pick { width: 47px; height: 14px; gap: 3px; border: 1px solid #bdbdbd; background: #f8f8f8; }
.pick svg { width: 6px; height: 9px; }
.pick--on { border-color: #55aeda; background: #dceffa; }
.clear { width: 18px; color: #666; }
input[type="checkbox"] { appearance: none; width: 7px; height: 7px; margin: 0 2px; border: 1px solid #bbb; background: #fff; }
input[type="checkbox"]:checked { display: grid; place-items: center; border-color: #555; background: #555; }
input[type="checkbox"]:checked::after { content: ""; width: 4px; height: 2px; border: solid #fff; border-width: 0 0 1px 1px; transform: rotate(-45deg); }
.options { display: grid; grid-auto-rows: 1fr; height: 210px; padding: 0 31px 0 6px; }
.options > * { display: flex; align-items: center; justify-content: space-between; }
.options h3 { justify-content: flex-start; font-weight: bold; }
.options h3::before { content: ""; margin: 0 3px 0 -1px; border: 2px solid transparent; border-top: 3px solid #555; border-bottom: 0; }
.options svg { width: 10px; height: 10px; }
.line { display: flex; gap: 5px; margin-right: -15px; }

.comments { position: absolute; left: 1px; bottom: 2px; display: flex; align-items: center; justify-content: space-between; width: 164px; height: 15px; padding: 0 7px 0 17px; background: #f4f4f4; }
.comments button { font-size: 10px; }
.navbar { position: absolute; left: 50%; bottom: 4px; transform: translateX(-50%); display: flex; gap: 3px; height: 12px; padding: 0 1px; background: rgba(255, 255, 255, .9); }
.navbar svg { width: 10px; height: 10px; }
.navbar .caret { border-width: 1px; border-top-width: 2px; margin: 0 1px 0 2px; }
.status { position: absolute; right: 5px; bottom: 4px; display: flex; align-items: center; gap: 6px; color: #222; }
.status svg { width: 11px; height: 11px; }

.timeline { flex: none; display: flex; height: 26px; padding: 6px 5px 0 6px; background: #f3f3f3; }
.player { display: flex; gap: 5px; width: 72px; height: 14px; }
.player svg { width: 8px; height: 8px; }
.track { position: relative; flex: 1; height: 16px; margin-right: 8px; border-bottom: 1px solid #aaa; }
.track__items { display: flex; justify-content: space-between; height: 18px; padding-right: 4px; }
.track__items li { width: 10px; padding-top: 1px; }
.track__items li::after { content: ""; display: block; width: 1px; height: 3px; margin: 4px 0 0 5px; background: #aaa; }
.track__items svg { width: 10px; height: 10px; }
.track__marker { position: absolute; left: 86%; top: -1px; width: 8px; height: 18px; }
.gear { height: 14px; }
.gear svg { width: 10px; height: 10px; }
```
FILE: timeline.js
```js
// One letter per feature: S sketch, E extrude, C combine, M move, K/g sketches, G body, L/N/D small features.
const sequence = "SEKEELMNMMgEMCEGKEECgECCEEEEECGLLDNMEEECNMELCCCCKEDEEEEEgEDCCgEEDDggKL";
document.getElementById("features").innerHTML = [...sequence]
  .map((kind) => `<li><svg><use href="#t-${kind}"/></svg></li>`)
  .join("");
```
